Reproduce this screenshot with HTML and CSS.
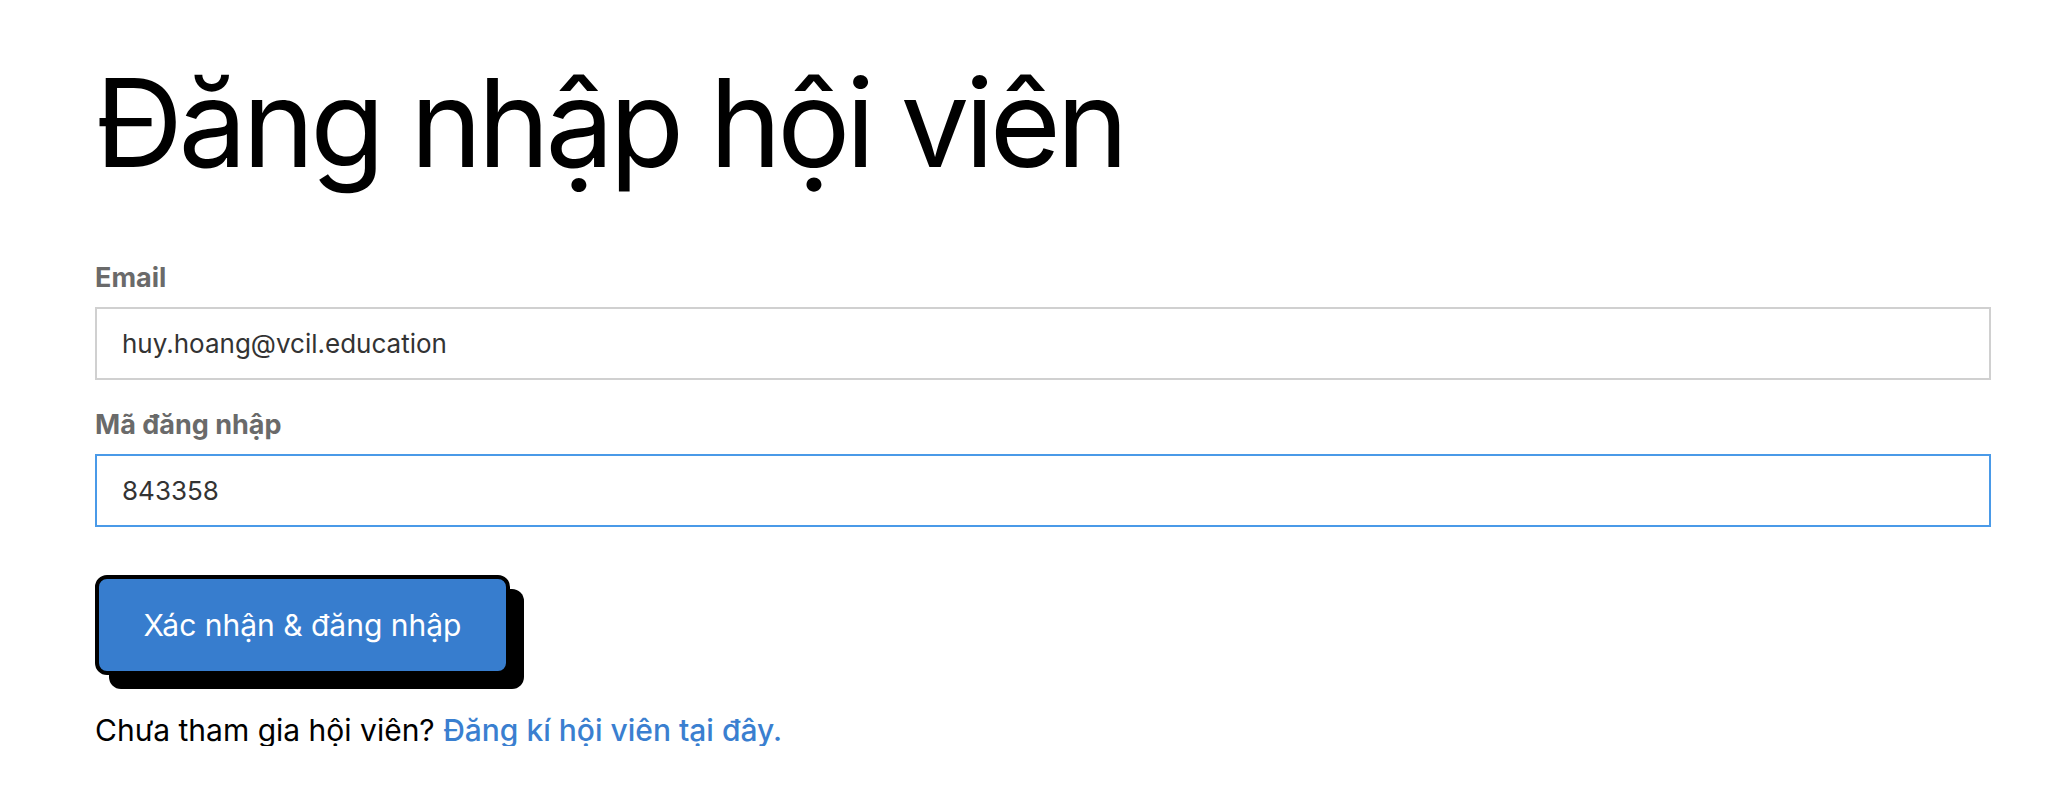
FILE: index.html
```html
<!DOCTYPE html>
<html lang="vi">
<head>
<meta charset="utf-8">
<title>Đăng nhập hội viên</title>
<link rel="stylesheet" href="styles.css">
</head>
<body>
<main class="page">
  <h1 class="title">Đăng nhập hội viên</h1>
  <form class="form">
    <label class="label" for="email">Email</label>
    <input class="field" id="email" type="text" value="huy.hoang@vcil.education">
    <label class="label label-second" for="code">Mã đăng nhập</label>
    <input class="field field-focus" id="code" type="text" value="843358">
    <div class="actions">
      <button class="btn" type="button">Xác nhận &amp; đăng nhập</button>
    </div>
    <p class="note">Chưa tham gia hội viên? <a class="link" href="#">Đăng kí hội viên tại đây.</a></p>
  </form>
</main>
</body>
</html>
```

FILE: styles.css
```css
html, body {
  margin: 0;
  padding: 0;
  background: #ffffff;
}

.page {
  padding: 62px 57px 0 95px;
  font-family: Inter, "Liberation Sans", sans-serif;
  color: #000;
}

.title {
  margin: 0;
  font-family: Inter, "Noto Sans", sans-serif;
  font-weight: 400;
  font-size: 122px;
  line-height: 1;
  letter-spacing: -4.5px;
  color: #000;
}

.form {
  display: flex;
  flex-direction: column;
  align-items: stretch;
  margin-top: 79px;
}

.label {
  display: block;
  font-size: 27px;
  font-weight: 700;
  line-height: 29px;
  color: #6a6a6a;
  margin-bottom: 15px;
}

.label-second {
  margin-top: 30px;
}

.field {
  box-sizing: border-box;
  width: 100%;
  height: 73px;
  margin: 0;
  border: 2px solid #d0d0d0;
  border-radius: 0;
  padding: 0 25px;
  font-family: Inter, "Liberation Sans", sans-serif;
  font-size: 26px;
  color: #333;
  background: #fff;
  outline: none;
}

.field-focus {
  border-color: #4a9ae8;
}

.actions {
  display: flex;
  margin-top: 48px;
}

.btn {
  box-sizing: border-box;
  width: 415px;
  height: 100px;
  border: 4px solid #000;
  border-radius: 12px;
  background: #377dce;
  box-shadow: 14px 14px 0 #000;
  color: #fff;
  font-family: Inter, "Liberation Sans", sans-serif;
  font-size: 30px;
  font-weight: 400;
  padding: 0;
  cursor: pointer;
}

.note {
  margin: 39px 0 0;
  font-size: 30px;
  line-height: 32px;
  color: #000;
}

.link {
  color: #3a7fd0;
  font-weight: 500;
  text-decoration: none;
}
```
